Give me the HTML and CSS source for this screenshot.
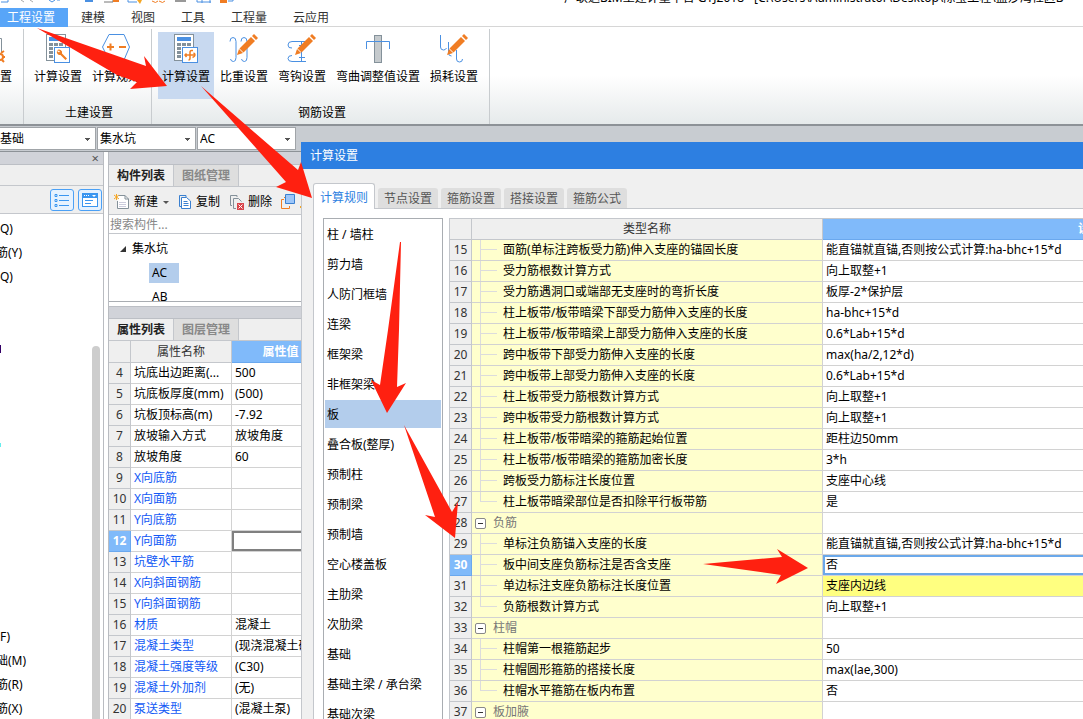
FILE: index.html
```html
<!DOCTYPE html>
<html lang="zh-CN">
<head>
<meta charset="utf-8">
<title>计算设置</title>
<link rel="stylesheet" href="styles.css">
</head>
<body>
<svg class="defs" width="0" height="0" aria-hidden="true">
  <defs>
    <g id="calc">
      <rect x="3.5" y="1.5" width="19" height="26" fill="#fff" stroke="#84919a"/>
      <rect x="6" y="4" width="14" height="4" fill="#4a90e2"/>
      <path d="M6 10h4v3h-4zM11 10h4v3h-4zM16 10h4v3h-4zM6 14h4v3h-4zM6 18h4v3h-4zM6 22h4v3h-4z" fill="#84919a"/>
      <rect x="11.500" y="14.500" width="15" height="15" fill="#fff" stroke="#4a90e2"/>
    </g>
    <g id="pencil" fill="#f07d23">
      <path d="M8 22l2-6 4 4z"/><path d="M10.500 15.500L22 4l4 4L14.500 19.500z"/><path d="M23 3l2-2 4 4-2 2z"/>
    </g>
  </defs>
</svg>

<header class="titlebar">
  <svg class="quick" width="240" height="4" viewBox="0 0 240 4" fill="none">
    <path d="M1 2h7V0" stroke="#4a90e2"/><path d="M21 0l3 2M30 0l3 2" stroke="#aaa"/><path d="M49 0l3 2 3-2M57 0h3" stroke="#4a90e2"/>
    <path d="M85 1h8" stroke="#4a90e2" stroke-width="2"/><path d="M104 2h9V0" stroke="#777"/><path d="M113 0h6v2h-6z" fill="#f07d23"/>
    <path d="M128 0v2h9" stroke="#4a90e2"/><path d="M137 0h5l-2 4z" fill="#f5a623"/><path d="M152 1q4 3 6 0M159 1q4 3 6 0" stroke="#f07d23"/>
    <path d="M175 1h11" stroke="#999" stroke-width="2"/><path d="M197 2h14M197 0v2M202 0v3M210 0v3" stroke="#4a90e2"/><path d="M220 0h7v3h-7z" fill="#f07d23"/><path d="M228 1h5V0" stroke="#4a90e2"/>
  </svg>
  <span class="app-title">广联达BIM土建计量平台 GTJ2018 - [C:\Users\Administrator\Desktop\陈莹工程\蓝莎湾社区B</span>
</header>

<nav class="menu">
  <button class="menu-item active">工程设置</button>
  <button class="menu-item">建模</button>
  <button class="menu-item">视图</button>
  <button class="menu-item">工具</button>
  <button class="menu-item">工程量</button>
  <button class="menu-item">云应用</button>
</nav>

<section class="ribbon">
  <div class="group cut-group">
    <div class="tools">
      <button class="tool cut-tool">
        <svg width="12" height="30" viewBox="0 0 12 30" fill="none"><path d="M0 5.500h1.500v14" stroke="#84919a"/><circle cx="0" cy="24" r="3" stroke="#f07d23" stroke-width="2"/><path d="M1 20l3-2M3 24h2M2 27l2 2" stroke="#f07d23" stroke-width="2"/></svg>
        <span>置</span>
      </button>
    </div>
  </div>
  <div class="group">
    <div class="tools">
      <button class="tool">
        <svg width="30" height="30" viewBox="0 0 30 30"><use href="#calc"/><path d="M14 17.500a3 3 0 0 1 5 3l5 5-1.500 1.500-5-5a3 3 0 0 1-3.500-4l2 1.500 1-1.500z" fill="#f07d23"/></svg>
        <span>计算设置</span>
      </button>
      <button class="tool">
        <svg width="30" height="30" viewBox="0 0 30 30" fill="none"><path d="M1.500 14L8 1.500h15L28.500 14 23 27H8z" stroke="#4a90e2"/><path d="M6 14h7M9.500 10.500v7M18 14h7" stroke="#f07d23" stroke-width="2"/></svg>
        <span>计算规则</span>
      </button>
    </div>
    <h2>土建设置</h2>
  </div>
  <div class="group">
    <div class="tools">
      <button class="tool selected">
        <svg width="30" height="30" viewBox="0 0 30 30" fill="none"><use href="#calc"/><path d="M22 17.500h-1.500q-1.500 0-1.500 2v5.500q0 2-1.500 2M14 22h9.500M15.500 20.500L14 22l1.500 2M22.500 20q1.500.5 1.500 2t-2.500 2.500" stroke="#f07d23" stroke-width="1.500"/></svg>
        <span>计算设置</span>
      </button>
      <button class="tool">
        <svg width="30" height="30" viewBox="0 0 30 30" fill="none"><path d="M1 8.500q0-4 3-4t3 4v16q0 4-2.500 4T1.500 26M12 8.500q0-4 3-4t3 4v16q0 4-2.500 4T12.500 26" stroke="#4a90e2"/><use href="#pencil"/></svg>
        <span>比重设置</span>
      </button>
      <button class="tool">
        <svg width="30" height="30" viewBox="0 0 30 30" fill="none"><path d="M19 8.500H5q-4 0-4 3.500t4 3M5 22.500q-4 0-4 3t4 3h14M14.500 8v20M12 12.500h6M12 24.500h6" stroke="#4a90e2"/><use href="#pencil"/></svg>
        <span>弯钩设置</span>
      </button>
      <button class="tool">
        <svg width="30" height="30" viewBox="0 0 30 30" fill="none"><rect x="11.500" y="2.500" width="7" height="27" fill="#c5cacd" stroke="#84919a"/><path d="M3.500 16V8.500h23V16" stroke="#4a90e2"/></svg>
        <span>弯曲调整值设置</span>
      </button>
      <button class="tool">
        <svg width="30" height="30" viewBox="0 0 30 30" fill="none"><path d="M1.500 2v12q0 3 3 3 2 0 3-2M9.500 9v11q0 3 3 3M17.500 17v9q0 3 3 3t3-3" stroke="#4a90e2"/><use href="#pencil"/></svg>
        <span>损耗设置</span>
      </button>
    </div>
    <h2>钢筋设置</h2>
  </div>
</section>

<div class="filters">
  <select class="first" aria-label="构件分类"><option>基础</option></select>
  <select aria-label="构件类型"><option>集水坑</option></select>
  <select aria-label="构件"><option>AC</option></select>
</div>

<main class="workspace">
  <aside class="nav-pane">
    <div class="strip"><button class="close" aria-label="关闭">×</button></div>
    <div class="nav-blank"></div>
    <div class="nav-tools">
      <button aria-label="列表视图"><svg width="16" height="14" viewBox="0 0 16 14" fill="none" stroke="#3a96f0"><path d="M5 2.500h10M5 7.500h10M5 12.500h10"/><path d="M1 1.500h2v2H1zM1 6.500h2v2H1zM1 11.500h2v2H1z"/></svg></button>
      <button aria-label="卡片视图"><svg width="16" height="14" viewBox="0 0 16 14"><path d="M0 0h16v14H0z" fill="#3a96f0"/><path d="M1 5h14v8H1z" fill="#fff"/><path d="M2 2h1v1H2zM4 2h1v1H4zM6 2h1v1H6zM10 2h4l-2 2z" fill="#fff"/><path d="M3 7h8v1H3zM3 10h6v1H3z" fill="#3a96f0"/></svg></button>
    </div>
    <div class="nav-body">
      <ul>
        <li>Q)</li><li class="cut">筋(Y)</li><li>Q)</li><li></li><li></li><li class="mark-navy"></li><li></li><li></li><li></li><li class="mark-cyan"></li><li></li><li></li><li></li><li></li><li></li><li></li><li></li><li>F)</li><li class="cut">础(M)</li><li class="cut">筋(R)</li><li class="cut">筋(X)</li>
      </ul>
      <div class="scrollbar"></div>
    </div>
  </aside>

  <section class="side">
    <div class="strip"></div>
    <div class="tabs"><button class="on">构件列表</button><button>图纸管理</button></div>
    <div class="actions">
      <button><svg width="16" height="16" viewBox="0 0 16 16" fill="none"><path d="M5 1.500h6L14.500 5v9.500h-11V7" fill="#fff" stroke="#84919a"/><path d="M11 1.500V5h3.500" stroke="#84919a"/><path d="M5 8.500h7M5 10.500h7M5 12.500h7" stroke="#ccd"/><path d="M0 1l5 4M5 1L0 5M2.500 0v6" stroke="#f5a623"/></svg>新建<i class="caret"></i></button>
      <button><svg width="14" height="16" viewBox="0 0 14 16" fill="none" stroke="#3a80d0"><path d="M3 12.500H1.500v-11H8V3"/><path d="M3.500 3.500h5l4 3.500v7.500h-9z" fill="#fff"/><path d="M5.500 7.500h4M5.500 9.500h5M5.500 11.500h5"/></svg>复制</button>
      <button><svg width="15" height="16" viewBox="0 0 15 16" fill="none"><path d="M3 11.500H1.500v-10H8V3M7 14.500H4.500v-10h5l3 3" stroke="#84919a"/><path d="M8 9h7v7H8z" fill="#d9444a"/><path d="M9.500 10.500l4 4M13.500 10.500l-4 4" stroke="#fff"/></svg>删除</button>
      <button aria-label="层间复制"><svg width="24" height="16" viewBox="0 0 24 16" fill="none"><path d="M3 5.500H.5v9h8V12M4 3.500H3" stroke="#f07d23"/><path d="M4.500.5h9v9h-9z" fill="#9cc6fa" stroke="#3a80d0"/><path d="M19 13h3" stroke="#f5a623" stroke-width="2"/></svg></button>
    </div>
    <input class="search" type="text" placeholder="搜索构件..." aria-label="搜索构件">
    <ul class="tree">
      <li class="root"><svg width="8" height="8" viewBox="0 0 8 8"><path d="M7 1v6H1z" fill="#333"/></svg>集水坑</li>
      <li class="child"><span class="picked">AC</span></li>
      <li class="child"><span>AB</span></li>
    </ul>
    <div class="strip second"></div>
    <div class="tabs"><button class="on">属性列表</button><button>图层管理</button></div>
    <table class="grid props">
      <colgroup><col class="c-num"><col class="c-prop"><col class="c-pval"></colgroup>
      <thead><tr><th></th><th>属性名称</th><th class="blue">属性值</th></tr></thead>
      <tbody>
        <tr><th>4</th><td>坑底出边距离(...</td><td>500</td></tr>
        <tr><th>5</th><td>坑底板厚度(mm)</td><td>(500)</td></tr>
        <tr><th>6</th><td>坑板顶标高(m)</td><td>-7.92</td></tr>
        <tr><th>7</th><td>放坡输入方式</td><td>放坡角度</td></tr>
        <tr><th>8</th><td>放坡角度</td><td>60</td></tr>
        <tr><th>9</th><td class="link">X向底筋</td><td></td></tr>
        <tr><th>10</th><td class="link">X向面筋</td><td></td></tr>
        <tr><th>11</th><td class="link">Y向底筋</td><td></td></tr>
        <tr><th class="blue">12</th><td class="link">Y向面筋</td><td class="cursor"></td></tr>
        <tr><th>13</th><td class="link">坑壁水平筋</td><td></td></tr>
        <tr><th>14</th><td class="link">X向斜面钢筋</td><td></td></tr>
        <tr><th>15</th><td class="link">Y向斜面钢筋</td><td></td></tr>
        <tr><th>16</th><td class="link">材质</td><td>混凝土</td></tr>
        <tr><th>17</th><td class="link">混凝土类型</td><td>(现浇混凝土碎石)</td></tr>
        <tr><th>18</th><td class="link">混凝土强度等级</td><td>(C30)</td></tr>
        <tr><th>19</th><td class="link">混凝土外加剂</td><td>(无)</td></tr>
        <tr><th>20</th><td class="link">泵送类型</td><td>(混凝土泵)</td></tr>
      </tbody>
    </table>
  </section>
</main>

<div class="dialog" role="dialog" aria-labelledby="dlg-title">
  <h1 id="dlg-title">计算设置</h1>
  <div class="dlg-tabs">
    <button class="on">计算规则</button><button>节点设置</button><button>箍筋设置</button><button>搭接设置</button><button>箍筋公式</button>
  </div>
  <div class="dlg-body">
    <ul class="kinds">
      <li>柱 / 墙柱</li><li>剪力墙</li><li>人防门框墙</li><li>连梁</li><li>框架梁</li><li>非框架梁</li><li class="picked">板</li><li>叠合板(整厚)</li><li>预制柱</li><li>预制梁</li><li>预制墙</li><li>空心楼盖板</li><li>主肋梁</li><li>次肋梁</li><li>基础</li><li>基础主梁 / 承台梁</li><li>基础次梁</li>
    </ul>
    <div class="rules-wrap">
      <table class="grid rules">
        <colgroup><col class="c-num"><col class="c-rule"><col class="c-rval"></colgroup>
        <thead><tr><th></th><th>类型名称</th><th class="blue">设置值</th></tr></thead>
        <tbody>
          <tr><th>15</th><td class="leaf">面筋(单标注跨板受力筋)伸入支座的锚固长度</td><td>能直锚就直锚,否则按公式计算:ha-bhc+15*d</td></tr>
          <tr><th>16</th><td class="leaf">受力筋根数计算方式</td><td>向上取整+1</td></tr>
          <tr><th>17</th><td class="leaf">受力筋遇洞口或端部无支座时的弯折长度</td><td>板厚-2*保护层</td></tr>
          <tr><th>18</th><td class="leaf">柱上板带/板带暗梁下部受力筋伸入支座的长度</td><td>ha-bhc+15*d</td></tr>
          <tr><th>19</th><td class="leaf">柱上板带/板带暗梁上部受力筋伸入支座的长度</td><td>0.6*Lab+15*d</td></tr>
          <tr><th>20</th><td class="leaf">跨中板带下部受力筋伸入支座的长度</td><td>max(ha/2,12*d)</td></tr>
          <tr><th>21</th><td class="leaf">跨中板带上部受力筋伸入支座的长度</td><td>0.6*Lab+15*d</td></tr>
          <tr><th>22</th><td class="leaf">柱上板带受力筋根数计算方式</td><td>向上取整+1</td></tr>
          <tr><th>23</th><td class="leaf">跨中板带受力筋根数计算方式</td><td>向上取整+1</td></tr>
          <tr><th>24</th><td class="leaf">柱上板带/板带暗梁的箍筋起始位置</td><td>距柱边50mm</td></tr>
          <tr><th>25</th><td class="leaf">柱上板带/板带暗梁的箍筋加密长度</td><td>3*h</td></tr>
          <tr><th>26</th><td class="leaf">跨板受力筋标注长度位置</td><td>支座中心线</td></tr>
          <tr><th>27</th><td class="leaf last">柱上板带暗梁部位是否扣除平行板带筋</td><td>是</td></tr>
          <tr><th>28</th><td class="branch"><button aria-label="折叠"></button>负筋</td><td></td></tr>
          <tr><th>29</th><td class="leaf">单标注负筋锚入支座的长度</td><td>能直锚就直锚,否则按公式计算:ha-bhc+15*d</td></tr>
          <tr><th class="blue">30</th><td class="leaf">板中间支座负筋标注是否含支座</td><td class="editing">否</td></tr>
          <tr><th>31</th><td class="leaf">单边标注支座负筋标注长度位置</td><td class="changed">支座内边线</td></tr>
          <tr><th>32</th><td class="leaf last">负筋根数计算方式</td><td>向上取整+1</td></tr>
          <tr><th>33</th><td class="branch"><button aria-label="折叠"></button>柱帽</td><td></td></tr>
          <tr><th>34</th><td class="leaf">柱帽第一根箍筋起步</td><td>50</td></tr>
          <tr><th>35</th><td class="leaf">柱帽圆形箍筋的搭接长度</td><td>max(lae,300)</td></tr>
          <tr><th>36</th><td class="leaf last">柱帽水平箍筋在板内布置</td><td>否</td></tr>
          <tr><th>37</th><td class="branch"><button aria-label="折叠"></button>板加腋</td><td></td></tr>
        </tbody>
      </table>
    </div>
  </div>
</div>

<svg class="arrows" width="1083" height="719" viewBox="0 0 1083 719" fill="#ff2010" aria-hidden="true">
  <path d="M37 28L146 66 144 56 167 86 130 89 137 82 117 75z"/>
  <path d="M201 86L298 170 301 162 312 198 276 187 286 182z"/>
  <path d="M400 242h1L399 330 397 387 406 383 387 413 371 380 380 385 388 330z"/>
  <path d="M404 425L452 512 458 502 455 538 425 515 435 517z"/>
  <path d="M703 564L782 557 777 549 808 568 776 584 781 575z"/>
</svg>
</body>
</html>
```
FILE: styles.css
```css
* { box-sizing: border-box; }

body {
  margin: 0;
  height: 100vh;
  overflow: hidden;
  position: relative;
  display: flex;
  flex-direction: column;
  background: #fff;
  color: #000;
  font: 12px/20px "Noto Sans", "Noto Sans CJK SC", sans-serif;
  white-space: nowrap;
}

button, input, select { font: inherit; color: inherit; }
button { border: 0; background: none; padding: 0; }
ul { list-style: none; margin: 0; padding: 0; }
h1, h2 { margin: 0; font: inherit; }
svg { display: block; flex: none; }
.defs { position: absolute; }

.titlebar {
  flex: none;
  height: 8px;
  overflow: hidden;
  display: flex;
  align-items: flex-start;
}
.quick { width: 240px; }
.app-title { margin: -12px 0 0 324px; }

.menu {
  flex: none;
  height: 19px;
  display: flex;
  border-bottom: 1px solid #d6d6d6;
}
.menu-item { padding: 0 13px; height: 19px; color: #333; }
.menu-item.active { padding-left: 7px; background: #58a5f8; color: #fff; }

.ribbon {
  flex: none;
  height: 99px;
  display: flex;
  background: linear-gradient(#fff 50%, #e6eaeb);
  border-bottom: 2px solid #8d9297;
}
.group {
  display: flex;
  flex-direction: column;
  justify-content: space-between;
  margin: 2px 0 0;
  padding: 3px 6px 0 5px;
  border-right: 1px solid #c8cccf;
}
.cut-group { width: 24px; padding-left: 0; }
.tools { display: flex; }
.tool {
  display: flex;
  flex-direction: column;
  align-items: center;
  gap: 4px;
  height: 67px;
  margin: 0 1px;
  padding: 1px 4px 0;
}
.cut-tool { margin: 0; padding: 1px 0 0; }
.tool.selected { background: #c8d9f0; }
.group h2 { padding: 0 0 1px 4px; text-align: center; }

.filters {
  flex: none;
  height: 26px;
  display: flex;
  gap: 1px;
  padding-top: 1px;
  background: #c8ccd1;
  border-bottom: 1px solid #8d9297;
}
.filters select {
  appearance: none;
  width: 99px;
  height: 23px;
  padding: 0 2px;
  border: 1px solid #a0a4a8;
  border-radius: 0;
  background-color: #fff;
  background-image: linear-gradient(#555, #555), linear-gradient(#555, #555), linear-gradient(#555, #555);
  background-repeat: no-repeat;
  background-size: 5px 1px, 3px 1px, 1px 1px;
  background-position: right 5px top 10px, right 6px top 11px, right 7px top 12px;
}
.filters .first { width: 96px; padding-left: 0; border-left: 0; }

.workspace {
  flex: 1;
  min-height: 0;
  display: flex;
  gap: 4px;
  background: #fff;
}

.nav-pane {
  width: 104px;
  display: flex;
  flex-direction: column;
  border-right: 1px solid #b9bcc1;
}
.strip {
  flex: none;
  height: 13px;
  background: #d1d3d9;
  border-bottom: 1px solid #bcbfc5;
  display: flex;
  justify-content: flex-end;
  align-items: center;
}
.close { padding: 0 4px; font-size: 13px; line-height: 10px; color: #555; }
.nav-blank { flex: none; height: 21px; background: #efefef; border-bottom: 1px solid #c4c7cc; }
.nav-tools {
  flex: none;
  height: 28px;
  display: flex;
  justify-content: flex-end;
  gap: 4px;
  padding: 3px 1px 2px;
  background: #efefef;
  border-bottom: 1px solid #c4c7cc;
}
.nav-tools button {
  width: 24px;
  height: 22px;
  display: grid;
  place-items: center;
  background: #e6f2fe;
  border: 1px solid #4ba0f5;
  border-radius: 3px;
}
.nav-body { flex: 1; min-height: 0; display: flex; justify-content: space-between; padding: 3px 3px 0 0; }
.nav-body li { height: 24px; line-height: 24px; }
.nav-body .cut { margin-left: -4px; }
.mark-navy, .mark-cyan { width: 1px; background: linear-gradient(#306, #306) no-repeat center / 1px 8px; }
.mark-cyan { background-image: linear-gradient(#6ee, #6ee); background-size: 1px 4px; }
.scrollbar { width: 8px; margin-top: 129px; background: #cdcdcd; border-radius: 4px 4px 0 0; }

.side {
  flex: 1;
  min-width: 0;
  border-left: 1px solid #b9bcc1;
  background: #fff;
}
.tabs { height: 22px; display: flex; background: #efefef; border-bottom: 1px solid #c4c7cc; }
.tabs button {
  width: 65px;
  height: 21px;
  font-weight: bold;
  color: #888;
  background: #dedede;
  border-right: 1px solid #c4c7cc;
}
.tabs .on { color: #222; background: #efefef; }
.actions {
  height: 28px;
  display: flex;
  align-items: center;
  gap: 9px;
  padding: 2px 0 0 5px;
  background: #efefef;
  border-bottom: 1px solid #c4c7cc;
}
.actions button { display: flex; align-items: center; gap: 4px; }
.caret { margin: 1px 0 0 1px; border: 3px solid transparent; border-top-color: #555; border-bottom: 0; }
.search {
  display: block;
  width: 100%;
  height: 19px;
  padding: 1px 1px 0;
  border: 0;
  border-bottom: 1px solid #c4c7cc;
}
.search::placeholder { color: #888; opacity: 1; }
.tree { height: 68px; overflow: hidden; padding-top: 3px; border-bottom: 1px solid #a9adb2; }
.tree li { height: 24px; display: flex; align-items: center; }
.root { gap: 5px; padding-left: 10px; }
.child { padding-left: 40px; }
.child span { padding: 0 3px; width: 30px; }
.child .picked { background: #b3cdec; }
.second { margin-top: 4px; border-top: 1px solid #bcbfc5; }

.grid { table-layout: fixed; border-collapse: separate; border-spacing: 0; }
.grid th, .grid td {
  height: 21px;
  padding: 0 0 0 3px;
  line-height: 20px;
  overflow: hidden;
  text-align: left;
  border: 0 solid #d2d2d2;
  border-width: 0 1px 1px 0;
}
.grid th { padding: 0; text-align: center; font-weight: normal; color: #333; background: #efefef; border-color: #c4c7cc; }
.grid .blue { background: #80bafa; border-color: #6aa8ee; color: #fff; font-weight: bold; }
.c-num { width: 22px; }
.props { width: 221px; }
.props thead th { height: 21px; line-height: 20px; }
.c-prop { width: 101px; }
.props thead th { height: 22px; }
.props .link { color: #1259f5; }
.props .cursor { box-shadow: inset 0 0 0 2px #808080; }

.dialog {
  position: absolute;
  inset: 142px 0 0 301px;
  display: flex;
  flex-direction: column;
  background: #f0f0f0;
  border-left: 1px solid #c4c7cc;
}
.dialog h1 {
  flex: none;
  height: 27px;
  margin-left: -1px;
  padding-left: 9px;
  line-height: 27px;
  background: #2d7fe1;
  color: #fff;
}
.dlg-tabs {
  flex: none;
  display: flex;
  align-items: flex-end;
  gap: 3px;
  height: 39px;
  padding-left: 11px;
}
.dlg-tabs button {
  width: 60px;
  height: 20px;
  padding-top: 1px;
  color: #555;
  background: #dedede;
  border-radius: 3px 3px 0 0;
}
.dlg-tabs .on {
  width: 62px;
  height: 26px;
  margin-bottom: -1px;
  padding-top: 2px;
  z-index: 1;
  color: #2d7fe1;
  background: #fff;
  border: 1px solid #c4c7cc;
  border-bottom: 0;
}
.dlg-body {
  flex: 1;
  min-height: 0;
  display: flex;
  gap: 6px;
  margin-left: 11px;
  padding: 9px 0 0 9px;
  overflow: hidden;
  background: #fff;
  border: 1px solid #c4c7cc;
  border-width: 1px 0 0 1px;
}
.kinds { flex: none; width: 120px; overflow: hidden; border: 1px solid #a9adb2; border-bottom: 0; padding: 0 1px; }
.kinds li { height: 28px; margin: 1px 0 2px; padding-left: 2px; line-height: 29px; }
.kinds .picked { background: #b3cdec; }
.rules-wrap { flex: 1; min-width: 0; overflow: hidden; border: 1px solid #c4c7cc; border-width: 1px 0 0 1px; }
.rules { width: 920px; }
.c-rule { width: 351px; }
.rules .leaf, .rules .branch { background-color: #ffffcd; }
.rules .leaf {
  padding-left: 31px;
  background-image: linear-gradient(#dcdcdc, #dcdcdc), linear-gradient(#dcdcdc, #dcdcdc);
  background-repeat: no-repeat;
  background-position: 8px 0, 9px 9px;
  background-size: 1px 100%, 16px 1px;
}
.rules .last { background-size: 1px 10px, 16px 1px; }
.rules .branch { padding-left: 3px; color: #777; }
.branch button {
  width: 11px;
  height: 11px;
  margin-right: 7px;
  vertical-align: -1px;
  border: 1px solid #888;
  border-radius: 2px;
  background: #fff linear-gradient(#333, #333) no-repeat center / 5px 1px;
}
.rules .editing { box-shadow: inset 0 0 0 2px #6aa8ea; }
.rules .changed { background: #ffff80; }

.arrows { position: absolute; top: 0; left: 0; pointer-events: none; }
```
